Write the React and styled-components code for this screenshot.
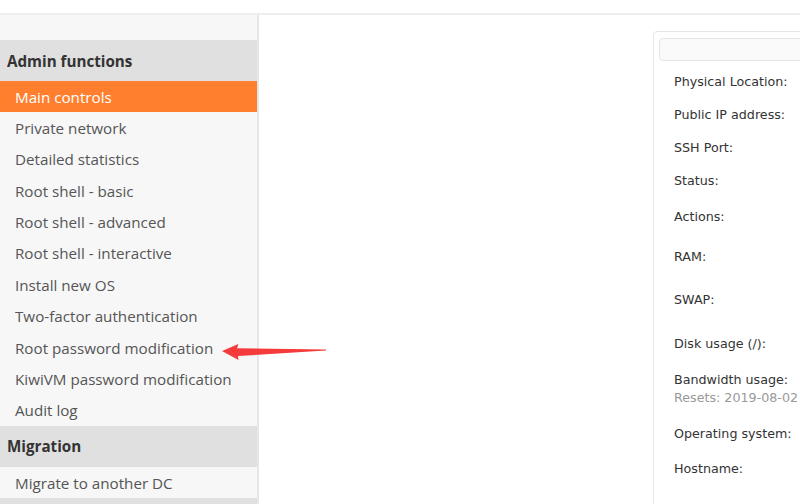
import React from "react";
import styled, { createGlobalStyle } from "styled-components";

const GlobalStyle = createGlobalStyle`
  html, body {
    margin: 0;
    padding: 0;
    background: #fff;
    overflow: hidden;
  }
`;

const adminItems = [
  "Main controls",
  "Private network",
  "Detailed statistics",
  "Root shell - basic",
  "Root shell - advanced",
  "Root shell - interactive",
  "Install new OS",
  "Two-factor authentication",
  "Root password modification",
  "KiwiVM password modification",
  "Audit log",
];

const rows = [
  { label: "Physical Location:", h: 33 },
  { label: "Public IP address:", h: 33 },
  { label: "SSH Port:", h: 33 },
  { label: "Status:", h: 34 },
  { label: "Actions:", h: 38 },
  { label: "RAM:", h: 42 },
  { label: "SWAP:", h: 43 },
  { label: "Disk usage (/):", h: 45 },
  { label: "Bandwidth usage:", sub: "Resets: 2019-08-02", h: 46 },
  { label: "Operating system:", h: 44 },
  { label: "Hostname:", h: 26 },
];

const App = () => {
  return (
    <Page>
      <GlobalStyle />
      <TopBar />
      <Body>
        <Sidebar>
          <SideGap />
          <SectionHeader>Admin functions</SectionHeader>
          {adminItems.map((item, i) => (
            <NavItem key={item} active={i === 0}>
              {item}
            </NavItem>
          ))}
          <SectionHeader>Migration</SectionHeader>
          <NavItem>Migrate to another DC</NavItem>
          <SectionHeader />
        </Sidebar>
        <Content>
          <Panel>
            <PanelBar />
            {rows.map((row) => (
              <InfoRow key={row.label} style={{ height: row.h }}>
                <Label>{row.label}</Label>
                {row.sub && <SubLabel>{row.sub}</SubLabel>}
              </InfoRow>
            ))}
          </Panel>
        </Content>
        <Arrow width="120" height="30" viewBox="216 340 120 30">
          <path
            d="M222 351 L238.5 344 L237 348.3 L326 349.4 L326 350.6 L238 356 L238.5 360 Z"
            fill="#f43a3a"
          />
        </Arrow>
      </Body>
    </Page>
  );
};

const Page = styled.div`
  width: 800px;
  height: 504px;
  overflow: hidden;
  display: flex;
  flex-direction: column;
`;

const TopBar = styled.div`
  height: 13px;
  flex-shrink: 0;
  background: #fff;
  border-bottom: 2px solid #eeeeee;
`;

const Body = styled.div`
  position: relative;
  flex: 1;
  display: flex;
  min-height: 0;
`;

const Sidebar = styled.div`
  width: 257px;
  flex-shrink: 0;
  overflow: hidden;
  background: #f7f7f7;
  border-right: 2px solid #e6e6e6;
  font-family: "Open Sans", "Noto Sans", sans-serif;
  display: flex;
  flex-direction: column;
`;

const SideGap = styled.div`
  height: 25px;
  flex-shrink: 0;
`;

const SectionHeader = styled.div`
  height: 41px;
  flex-shrink: 0;
  display: flex;
  align-items: center;
  padding-left: 7px;
  background: #e0e0e0;
  color: #333;
  font-size: 15.2px;
  font-weight: 700;
`;

const NavItem = styled.div`
  height: 31.36px;
  flex-shrink: 0;
  display: flex;
  align-items: center;
  padding-left: 15px;
  font-size: 15.2px;
  color: ${(p) => (p.active ? "#ffffff" : "#555555")};
  background: ${(p) => (p.active ? "#ff7f2f" : "transparent")};
`;

const Content = styled.div`
  flex: 1;
  padding: 16px 0 0 394px;
  min-width: 0;
`;

const Panel = styled.div`
  width: 420px;
  border: 1px solid #e6e6e6;
  border-radius: 4px;
  padding: 6px 5px 40px;
  font-family: "DejaVu Sans", Verdana, sans-serif;
`;

const PanelBar = styled.div`
  height: 21px;
  border: 1px solid #e6e6e6;
  border-radius: 4px;
  background: #fafafa;
  margin-bottom: 4px;
`;

const InfoRow = styled.div`
  display: flex;
  flex-direction: column;
  justify-content: center;
  padding-left: 15px;
`;

const Label = styled.div`
  font-size: 12.7px;
  color: #333;
  line-height: 18px;
`;

const SubLabel = styled.div`
  font-size: 12.7px;
  color: #999;
  line-height: 18px;
`;

const Arrow = styled.svg`
  position: absolute;
  left: 216px;
  top: 325px;
`;

export default App;
